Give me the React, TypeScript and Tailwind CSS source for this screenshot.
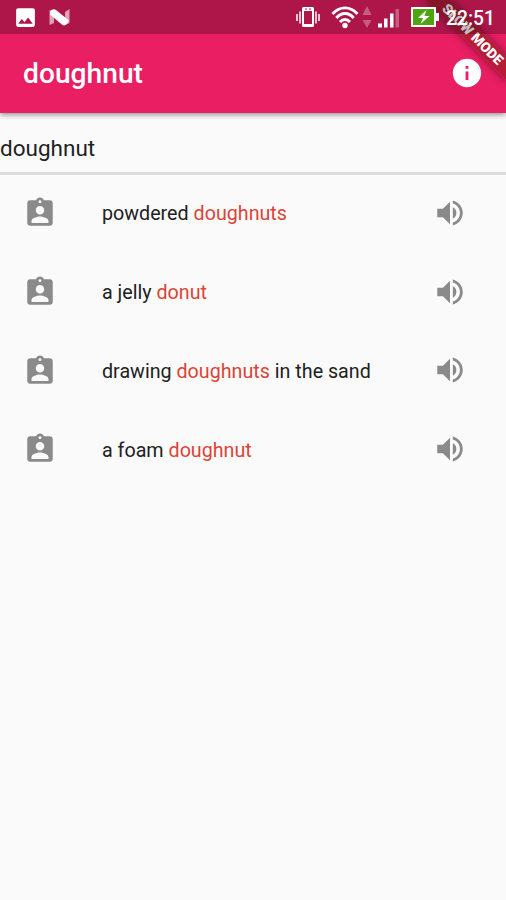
import { useState } from "react"

import {
  MdAssignmentInd,
  MdImage,
  MdInfo,
  MdVolumeUp,
} from "react-icons/md"

const results = [
  { before: "powdered ", match: "doughnuts", after: "" },
  { before: "a jelly ", match: "donut", after: "" },
  { before: "drawing ", match: "doughnuts", after: " in the sand" },
  { before: "a foam ", match: "doughnut", after: "" },
]

function StatusBar() {
  return (
    <div className="absolute inset-x-0 top-0 flex h-[34px] items-center bg-black/25 text-white">
      <MdImage className="ml-[13px] h-[25px] w-[25px]" />
      <svg className="ml-[11px] h-[17px] w-[21px]" viewBox="0 0 21 17">
        <path d="M0.5 1L5 3v11L0.5 16zM16 3l4.500-3v14L16 16z" fill="#fff" opacity="0.6" />
        <path d="M1 2.5C3 0 5 -0.500 7 1L20 11.500C18.500 15 16 17.500 13.500 16L1 5.500z" fill="#fff" />
      </svg>

      <svg className="ml-[225px] h-[22px] w-[26px]" viewBox="0 0 26 22">
        <path d="M2 8v7M24 8v7M5 5.500v12M21 5.500v12" stroke="#fff" strokeWidth="2" opacity="0.75" />
        <rect x="7" y="1" width="12" height="20" rx="1.500" fill="#fff" />
        <rect x="9" y="5" width="8" height="13" fill="#af174a" />
        <path d="M10 3h2M14 3h2" stroke="#af174a" strokeWidth="1" />
      </svg>
      <svg className="ml-[10px] h-[24px] w-[28px]" viewBox="0 0 28 24">
        <g fill="none" stroke="#fff" strokeWidth="2.900">
          <path d="M1.500 9C8.500 0.800 19.500 0.800 26.500 9" />
          <path d="M5.300 13C10.500 7 17.500 7 22.700 13" />
          <path d="M9 17C12 13.600 16 13.600 19 17" />
        </g>
        <circle cx="14" cy="20.500" r="2.700" fill="#fff" />
      </svg>
      <svg className="ml-[3px] h-[24px] w-[10px]" viewBox="0 0 10 24">
        <path d="M5 1l4.500 9h-9zM5 23l4.500-8h-9z" fill="#fff" opacity="0.3" />
      </svg>
      <svg className="ml-[5px] h-[21px] w-[23px]" viewBox="0 0 23 21">
        <path d="M1 16.500h4v4H1zM7 11.500h3.500v9H7zM13 6.500h3.500v14h-3.500z" fill="#fff" />
        <path d="M18.500 2h3.500v18.500h-3.500z" fill="#fff" opacity="0.3" />
      </svg>
      <svg className="ml-[11px] h-[20px] w-[28px]" viewBox="0 0 28 20">
        <path d="M0 0h25v6h3v8h-3v6H0z" fill="#fff" />
        <path d="M2 2h21v16H2z" fill="#4fa511" />
        <path d="M15.500 3L7 11h5l-2.500 6L18.500 9h-5z" fill="#fff" />
      </svg>
      <span className="ml-[7px] pt-[3px] text-[19.300px] leading-none font-medium">22:51</span>
    </div>
  )
}

export default function App() {
  const [query, setQuery] = useState<string>("doughnut")

  return (
    <div className="relative h-[900px] w-full overflow-hidden bg-[#fafafa] font-[Roboto,sans-serif] text-[#212121]">
      <header className="relative z-10 h-[112.500px] bg-[#e91e63] pt-[34px] text-white shadow-[0_2px_5px_rgba(0,0,0,0.400)]">
        <div className="flex h-full items-center justify-between pr-[22px] pl-[23px]">
          <h1 className="pt-[2px] text-[28.200px] leading-none font-medium">{query}</h1>
          <MdInfo className="h-[34px] w-[34px]" />
        </div>
        <div className="absolute top-0 right-0 h-[112px] w-[112px] overflow-hidden">
          <div className="absolute top-[26px] left-[22px] flex h-[17px] w-[113px] rotate-45 items-center justify-center bg-[#a81c2c]/80 text-[13.900px] leading-none font-black whitespace-nowrap shadow-[0_0_8px_rgba(0,0,0,0.500)]">
            SLOW MODE
          </div>
        </div>
        <StatusBar />
      </header>

      <div className="flex h-[62px] border-b-[3px] border-[#dcdcdc]">
        <input
          type="text"
          aria-label="Search"
          value={query}
          onChange={(e) => setQuery(e.target.value)}
          className="mt-[12px] h-[46px] w-full bg-transparent text-[22.500px] outline-none"
        />
      </div>

      <ul>
        {results.map((r, i) => (
          <li key={i} className="flex h-[78.700px] items-center pr-[39px] pl-[23px]">
            <MdAssignmentInd className="mb-px h-[34px] w-[34px] text-[#8a8a8a]" />
            <p className="ml-[45px] grow pt-px text-[19.700px] leading-none whitespace-pre">
              {r.before}
              <span className="text-[#db4437]">{r.match}</span>
              {r.after}
            </p>
            <MdVolumeUp className="mb-[2px] h-[34px] w-[34px] text-[#8a8a8a]" />
          </li>
        ))}
      </ul>
    </div>
  )
}
